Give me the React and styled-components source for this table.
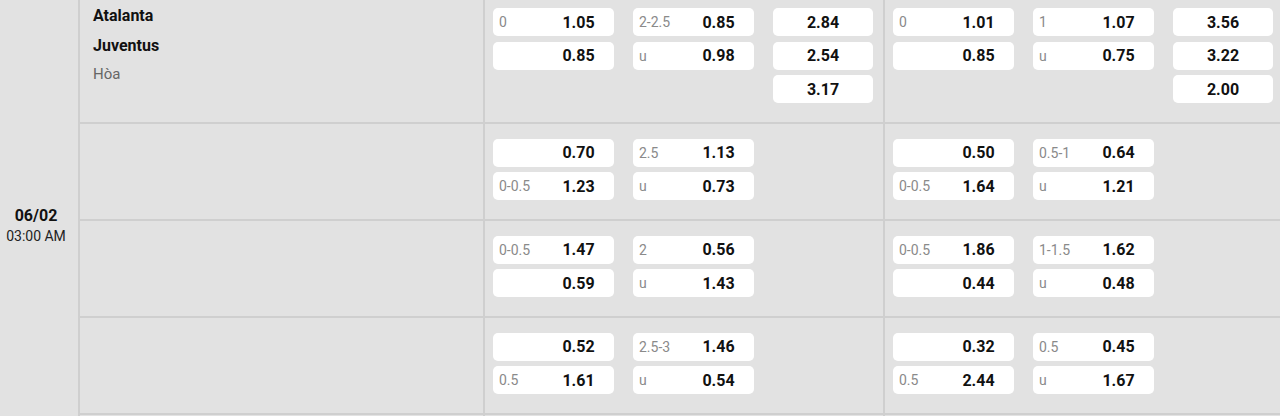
import React from "react";
import styled, { createGlobalStyle } from "styled-components";

const Global = createGlobalStyle`
  html, body { margin: 0; padding: 0; background: #e2e2e2; overflow: hidden; }
  body { font-family: Roboto, "Liberation Sans", Arial, sans-serif; color: #111; }
  * { box-sizing: border-box; }
`;

const Table = styled.div`
  display: flex;
  width: 1290px;
  margin-top: -7px;
  background: #e2e2e2;
`;

const DateCol = styled.div`
  width: 80px;
  flex: none;
  border-right: 2px solid #cfcfcf;
  padding: 211.5px 6px 0 0;
  text-align: center;
`;

const DateDay = styled.div`
  font-size: 16px;
  font-weight: 700;
  line-height: 21px;
  color: #111;
`;

const DateTime = styled.div`
  font-size: 14px;
  line-height: 21px;
  color: #222;
`;

const Rows = styled.div`
  display: flex;
  flex-direction: column;
  flex: none;
`;

const Row = styled.div`
  display: flex;
  border-bottom: 2px solid #cfcfcf;
  min-height: ${(p) => (p.$empty ? "60px" : "auto")};
`;

const TeamCell = styled.div`
  width: 403px;
  flex: none;
  padding: 8px 0 0 13px;
`;

const Team = styled.div`
  font-size: 16px;
  font-weight: 700;
  line-height: 30px;
  color: #111;
`;

const Draw = styled.div`
  font-size: 15px;
  line-height: 26px;
  color: #666;
`;

const Section = styled.div`
  width: 400px;
  flex: none;
  border-left: 2px solid #cfcfcf;
  padding: 15px 0 18.5px 8px;
  display: grid;
  grid-template-columns: 121px 121px 100px;
  column-gap: 19px;
  align-items: start;
`;

const Stack = styled.div`
  display: flex;
  flex-direction: column;
  gap: 5.5px;
`;

const OddBox = styled.div`
  height: 28px;
  background: #fff;
  border-radius: 5px;
  display: flex;
  align-items: center;
`;

const Label = styled.span`
  width: 50px;
  flex: none;
  padding-left: 6px;
  font-size: 14px;
  color: #8a8a8a;
  white-space: nowrap;
`;

const Value = styled.span`
  flex: 1;
  text-align: center;
  font-size: 16px;
  font-weight: 700;
  color: #111;
`;

const Odd = ({ label, value, plain }) => (
  <OddBox>
    {!plain && <Label>{label}</Label>}
    <Value>{value}</Value>
  </OddBox>
);

const rows = [
  {
    teams: true,
    sections: [
      [[["0", "1.05"], ["", "0.85"]], [["2-2.5", "0.85"], ["u", "0.98"]], ["2.84", "2.54", "3.17"]],
      [[["0", "1.01"], ["", "0.85"]], [["1", "1.07"], ["u", "0.75"]], ["3.56", "3.22", "2.00"]],
    ],
  },
  {
    sections: [
      [[["", "0.70"], ["0-0.5", "1.23"]], [["2.5", "1.13"], ["u", "0.73"]], []],
      [[["", "0.50"], ["0-0.5", "1.64"]], [["0.5-1", "0.64"], ["u", "1.21"]], []],
    ],
  },
  {
    sections: [
      [[["0-0.5", "1.47"], ["", "0.59"]], [["2", "0.56"], ["u", "1.43"]], []],
      [[["0-0.5", "1.86"], ["", "0.44"]], [["1-1.5", "1.62"], ["u", "0.48"]], []],
    ],
  },
  {
    sections: [
      [[["", "0.52"], ["0.5", "1.61"]], [["2.5-3", "1.46"], ["u", "0.54"]], []],
      [[["", "0.32"], ["0.5", "2.44"]], [["0.5", "0.45"], ["u", "1.67"]], []],
    ],
  },
];

export default function App() {
  return (
    <>
      <Global />
      <Table>
        <DateCol>
          <DateDay>06/02</DateDay>
          <DateTime>03:00 AM</DateTime>
        </DateCol>
        <Rows>
          {rows.map((r, i) => (
            <Row key={i}>
              <TeamCell>
                {r.teams && (
                  <>
                    <Team>Atalanta</Team>
                    <Team>Juventus</Team>
                    <Draw>Hòa</Draw>
                  </>
                )}
              </TeamCell>
              {r.sections.map((sec, j) => (
                <Section key={j}>
                  <Stack>
                    {sec[0].map(([l, v], k) => (
                      <Odd key={k} label={l} value={v} />
                    ))}
                  </Stack>
                  <Stack>
                    {sec[1].map(([l, v], k) => (
                      <Odd key={k} label={l} value={v} />
                    ))}
                  </Stack>
                  <Stack>
                    {sec[2].map((v, k) => (
                      <Odd key={k} plain value={v} />
                    ))}
                  </Stack>
                </Section>
              ))}
            </Row>
          ))}
          <Row $empty>
            <TeamCell />
            <Section />
            <Section />
          </Row>
        </Rows>
      </Table>
    </>
  );
}
